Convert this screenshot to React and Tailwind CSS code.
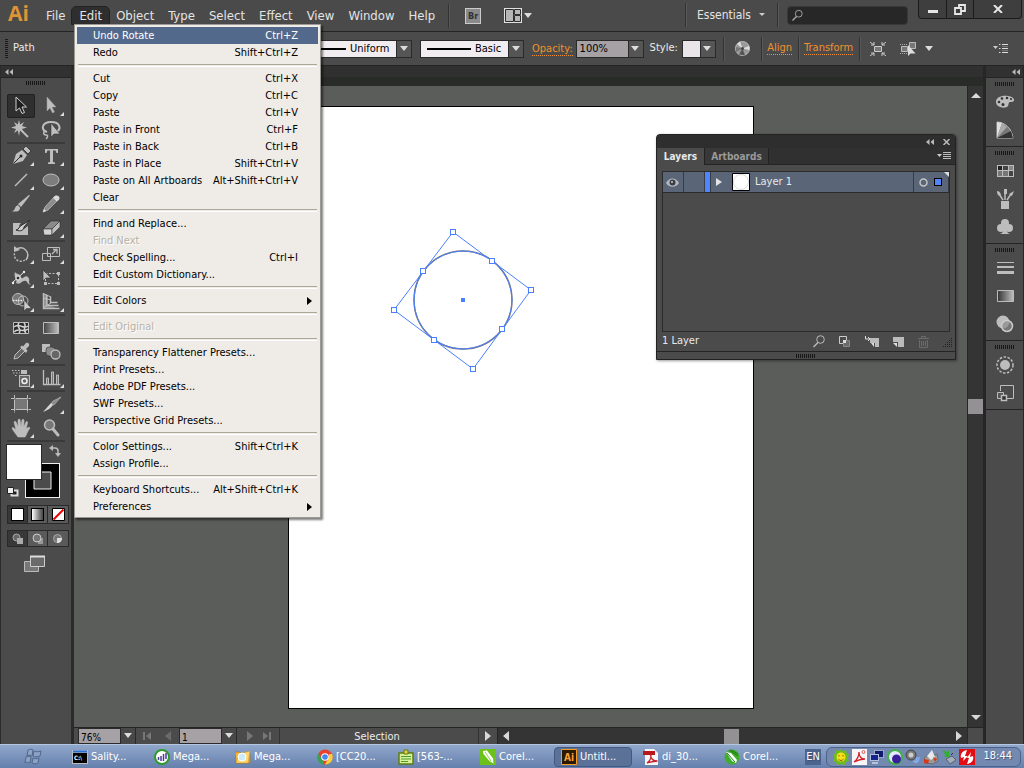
import { useState } from "react";
import clsx from "clsx";

const menus = ["File", "Edit", "Object", "Type", "Select", "Effect", "View", "Window", "Help"];

// null = separator
const editMenu = [
  { label: "Undo Rotate", keys: "Ctrl+Z" },
  { label: "Redo", keys: "Shift+Ctrl+Z" },
  null,
  { label: "Cut", keys: "Ctrl+X" },
  { label: "Copy", keys: "Ctrl+C" },
  { label: "Paste", keys: "Ctrl+V" },
  { label: "Paste in Front", keys: "Ctrl+F" },
  { label: "Paste in Back", keys: "Ctrl+B" },
  { label: "Paste in Place", keys: "Shift+Ctrl+V" },
  { label: "Paste on All Artboards", keys: "Alt+Shift+Ctrl+V" },
  { label: "Clear" },
  null,
  { label: "Find and Replace..." },
  { label: "Find Next", disabled: true },
  { label: "Check Spelling...", keys: "Ctrl+I" },
  { label: "Edit Custom Dictionary..." },
  null,
  { label: "Edit Colors", sub: true },
  null,
  { label: "Edit Original", disabled: true },
  null,
  { label: "Transparency Flattener Presets..." },
  { label: "Print Presets..." },
  { label: "Adobe PDF Presets..." },
  { label: "SWF Presets..." },
  { label: "Perspective Grid Presets..." },
  null,
  { label: "Color Settings...", keys: "Shift+Ctrl+K" },
  { label: "Assign Profile..." },
  null,
  { label: "Keyboard Shortcuts...", keys: "Alt+Shift+Ctrl+K" },
  { label: "Preferences", sub: true },
];

const L = "#bdbdbd"; // light icon colour
const D = "#2b2b2b"; // dark icon colour

// [name, has flyout, artwork]
const toolGroups = [
  [
    ["Selection", false, <path d="M7 3v14l3.5-3 2.5 5.5 2.5-1-2.5-5.500h4.500z" fill="#1e1e1e" stroke="#d0d0d0" />],
    ["Direct Selection", true, <path d="M8 3v14l3-3 2.500 5 2-1-2.500-5h4z" fill={L} stroke="#999" strokeWidth=".5" />],
    [
      "Magic Wand",
      false,
      <g stroke={L}>
        <path d="M12 12l7 7" strokeWidth="2" />
        <path d="M10 2l1.200 4.500L15 4l-2 4 5 1.500-5 1.500 2 4-4-2.500L10 18l-1.200-5.500L5 15l2-4-5-1.500L7 8 5 4l3.800 2.500z" fill={L} stroke="none" />
      </g>,
    ],
    [
      "Lasso",
      false,
      <g>
        <path d="M8 14C1 12 3 4 12 4s11 7 5 10" fill="none" stroke={L} strokeWidth="2" />
        <path d="M7 13c-3 0-3 4 0 4s1 3 0 4" fill="none" stroke={L} strokeWidth="1.500" />
        <path d="M12 5v14l3-3h6z" fill={L} stroke={D} strokeWidth=".5" />
      </g>,
    ],
  ],
  [
    [
      "Pen",
      true,
      <g>
        <path d="M4 20l3-10 6-4 5 5-4 6z" fill={L} />
        <path d="M14 5l3-3 5 5-3 3z" fill={L} stroke={D} strokeWidth=".8" />
        <path d="M4.500 19.500l7-7" stroke={D} />
        <circle cx="12" cy="12" r="1.500" fill={D} />
      </g>,
    ],
    ["Type", true, <path d="M6 5h13v4h-1.500l-1-2.500h-2.500V18l2 .5V20H9v-1.500l2-.5V6.500H8.500l-1 2.500H6z" fill={L} />],
    ["Line Segment", true, <path d="M6 18L18 6" stroke={L} strokeWidth="1.500" />],
    ["Ellipse", true, <ellipse cx="12" cy="12" rx="8" ry="6" fill="#7d7d7d" stroke={L} />],
    [
      "Paintbrush",
      false,
      <g fill={L}>
        <path d="M21 3.500L12 15l-3-3L20 3z" />
        <path d="M11 15.500c0 5-5 4-8 4 4-1.500 2-5 6-6.500z" />
      </g>,
    ],
    [
      "Pencil",
      true,
      <g>
        <path d="M4 20l2-5L16 4l4 3L9 18z" fill="#8d8d8d" stroke={L} strokeWidth=".8" />
        <path d="M16 4c2-1.500 6 1 4 3.500l-2 2-4-3.500z" fill="#d8d8d8" />
        <path d="M4 20l1-3 2 2z" fill="#e2e2e2" />
      </g>,
    ],
    [
      "Blob Brush",
      false,
      <g>
        <path d="M4 7h8c-3 2-2 8 3 6l4-3v9H4z" fill={L} />
        <path d="M21 4L13 9c-3 1-3 5-6 5 5 2 8 0 8-3z" fill="#cfcfcf" stroke={D} />
      </g>,
    ],
    [
      "Eraser",
      true,
      <g stroke={D} strokeWidth=".6">
        <path d="M4 13l8-8h9l-8 8z" fill="#8a8a8a" />
        <path d="M4 13h9v6H5z" fill="#d4d4d4" />
        <path d="M13 13l8-8v6l-8 8z" fill={L} />
      </g>,
    ],
  ],
  [
    [
      "Rotate",
      true,
      <g>
        <path d="M8 7c7-4 14 4 9 11" fill="none" stroke={L} strokeWidth="1.500" />
        <path d="M16 18c-6 4-13-2-10-8" fill="none" stroke={L} strokeWidth="1.500" strokeDasharray="2 1.500" />
        <path d="M5 4v6l6-2z" fill={L} />
      </g>,
    ],
    [
      "Scale",
      true,
      <g fill="none" stroke={L}>
        <path d="M8.500 5.500h12v9h-12z" />
        <path d="M3.500 11.500h8v7h-8z" />
        <path d="M13 12l5-5M14 7.500h4v4" strokeWidth="1.300" />
      </g>,
    ],
    [
      "Width",
      true,
      <g>
        <path d="M3 17l12-11" stroke="#eee" />
        <path d="M6 6c2 3 5 1 6 5s4-3 7 0c3 4-1 5 3 8-5-1-3-5-7-4s-3 4-8 2c2-3-3-6-1-11z" fill={L} />
        <circle cx="9" cy="12" r="2" fill={D} stroke="#eee" />
        <circle cx="4" cy="17" r="1.200" fill="#eee" />
        <circle cx="15" cy="6" r="1.200" fill="#eee" />
      </g>,
    ],
    [
      "Free Transform",
      false,
      <g>
        <path d="M6.500 7.500h13v10h-13z" fill="none" stroke={L} strokeDasharray="2 1.500" />
        <path d="M18 6h3v3h-3zM18 16h3v3h-3zM5 16h3v3H5z" fill={L} />
        <path d="M4 4v11l3-3h5z" fill={L} stroke={D} strokeWidth=".6" />
      </g>,
    ],
    [
      "Shape Builder",
      true,
      <g>
        <circle cx="9" cy="9" r="5.500" fill="#777" stroke={L} />
        <circle cx="14" cy="11" r="5" fill="none" stroke={L} />
        <path d="M4 10.500h12" stroke="#eee" strokeWidth="1.500" strokeDasharray="1.500 1" />
        <path d="M15 10v11l2.500-2.500h5z" fill="#ccc" stroke={D} strokeWidth=".5" />
      </g>,
    ],
    [
      "Perspective Grid",
      true,
      <g fill="none" stroke={L}>
        <path d="M4 3l5 3v9l11 4H4z" fill="#888" stroke="none" />
        <path d="M4.500 3v15.500h16" strokeWidth="1.500" />
        <path d="M7.500 4.500v11h12M11.500 6.500v6h7" strokeWidth="1.500" />
        <path d="M4 3.500l8 3.500M4 8l8 2M4 18l8-5" />
      </g>,
    ],
  ],
  [
    [
      "Mesh",
      false,
      <g>
        <path d="M4.500 6.500h15v11h-15z" fill="#2a2a2a" stroke={L} />
        <path d="M5 11c5-5 9 3 14-1M5 16c4-5 10 1 14-3M10 7c-4 4 4 6 0 10M15 7c4 4-3 6 2 10" fill="none" stroke="#d0d0d0" strokeWidth="1.500" />
      </g>,
    ],
    [
      "Gradient",
      false,
      <g>
        <defs>
          <linearGradient id="gTool">
            <stop stopColor="#444" />
            <stop offset="1" stopColor="#c0c0c0" />
          </linearGradient>
        </defs>
        <path d="M4.500 6.500h15v11h-15z" fill="url(#gTool)" stroke={L} />
      </g>,
    ],
    [
      "Eyedropper",
      true,
      <g>
        <path d="M5 19l1-4 7-7 3 3-7 7z" fill="#666" stroke={L} />
        <path d="M11 7l2-1.500 1 1L17 3c2-1 4 1 3 3l-3 3 1.500 1.500L17 13z" fill={L} />
      </g>,
    ],
    [
      "Blend",
      false,
      <g>
        <path d="M3 4h8v8H3z" fill={L} />
        <rect x="7" y="7" width="9" height="9" rx="3" fill="#8b8b8b" stroke={D} strokeWidth=".6" />
        <circle cx="16.500" cy="14.500" r="4.500" fill="#666" stroke={L} strokeWidth="1.300" />
      </g>,
    ],
  ],
  [
    [
      "Symbol Sprayer",
      true,
      <g>
        <rect x="10.500" y="9.500" width="10" height="11" fill="#666" stroke={L} />
        <path d="M12 4h6v4h-6z" fill={L} />
        <circle cx="15.500" cy="15" r="2.500" fill="none" stroke="#eee" strokeWidth="1.500" />
        <path d="M3 4.500h8M4 7h7M6 9.500h3" stroke={L} strokeDasharray="1.500 1.500" />
      </g>,
    ],
    [
      "Column Graph",
      true,
      <g fill="none" stroke={L}>
        <path d="M4.500 4v14.500h17" strokeWidth="1.300" />
        <path d="M7.500 18v-6h2v6M12.500 18V6h2v12M17.500 18V9h2v9" fill="#777" />
      </g>,
    ],
  ],
  [
    [
      "Artboard",
      false,
      <g>
        <path d="M6 7h12v10H6z" fill="#777" />
        <path d="M2 6.500h20M2 17.500h20M5.500 3v18M18.500 3v18" stroke={L} strokeDasharray="3.500 1 12 1" />
      </g>,
    ],
    [
      "Slice",
      true,
      <g>
        <path d="M22 5l-8 4-2 3 3 1z" fill="#8a8a8a" stroke={L} strokeWidth=".6" />
        <path d="M12 11L4 20c5-2 8-4 10-7z" fill="#d5d5d5" />
      </g>,
    ],
    [
      "Hand",
      true,
      <path
        d="M9 21c-2-3-5-6-6-9 1-1 2 0 4 2L5 6c1-1.500 2-.5 2.500 1L9 11V4c1-1.500 2-1 2.200.5L12 11l1-7c1-1.300 2-.6 2 .8L14.800 11l2.200-5c1-1 2-.2 1.500 1L17 13c2-2 4-2 4-1-3 4-3 6-5 9z"
        fill={L}
        stroke={L}
        strokeWidth=".6"
      />,
    ],
    [
      "Zoom",
      false,
      <g>
        <circle cx="10.500" cy="9" r="5" fill="#777" stroke={L} strokeWidth="1.500" />
        <path d="M14 13l5 6" stroke={L} strokeWidth="3" strokeLinecap="round" />
      </g>,
    ],
  ],
];

const dockGroups = [
  [
    [
      "Color",
      <g>
        <path d="M3 12c0-5 6-7 12-6 7 1 8 6 3 6-3 0-2 2-3 4-2 3-12 2-12-4z" fill={L} />
        <g fill="#333">
          <circle cx="6" cy="12" r="1.300" />
          <circle cx="9" cy="8.500" r="1.300" />
          <circle cx="14" cy="8" r="1.300" />
          <circle cx="18" cy="9" r="1.100" />
          <circle cx="10" cy="14.500" r="1.500" />
        </g>
      </g>,
    ],
    [
      "Color Guide",
      <g>
        <path d="M4 20V4c8 0 15 7 16 16z" fill="#777" stroke={L} />
        <path d="M4 20V4l5 1z" fill="#e0e0e0" />
        <path d="M4 20L9 5l5 4z" fill="#aaa" />
        <path d="M4 20L18 13l2 7z" fill="#333" />
      </g>,
    ],
  ],
  [
    [
      "Swatches",
      <g>
        <path d="M4 6h17v12H4z" fill={L} />
        <path d="M5 7h4v4H5z" fill="#222" />
        <path d="M10 7h5v4h-5z" fill="#444" />
        <path d="M16 7h4v4h-4z" fill="#888" />
        <path d="M5 12h4v5H5zM10 12h5v5h-5z" fill="#777" />
        <path d="M16 12h4v5h-4z" fill="#444" />
      </g>,
    ],
    [
      "Brushes",
      <g fill={L}>
        <path d="M8 14h8v8H8z" />
        <path d="M10 13L6 7M12 13V6M14 13l4-6" stroke={L} strokeWidth="1.500" />
        <path d="M4 4c3 0 4 3 4 5-3 0-4-2-4-5zM11 2h3v5h-3zM16 7l5-3-2 5z" />
      </g>,
    ],
    [
      "Symbols",
      <g fill={L}>
        <circle cx="12" cy="8" r="4" />
        <circle cx="8" cy="13" r="4" />
        <circle cx="16" cy="13" r="4" />
        <path d="M11 11h2c0 5 1 7 4 8H7c3-1 4-3 4-8z" />
      </g>,
    ],
  ],
  [
    ["Stroke", <path d="M4 6h17v1H4zM4 10h17v2H4zM4 15h17v3H4z" fill={L} />],
    [
      "Gradient",
      <g>
        <defs>
          <linearGradient id="gDock">
            <stop stopColor="#333" />
            <stop offset="1" stopColor="#c0c0c0" />
          </linearGradient>
        </defs>
        <path d="M4.500 6.500h16v11h-16z" fill="url(#gDock)" stroke={L} />
      </g>,
    ],
    [
      "Transparency",
      <g>
        <circle cx="10" cy="10" r="6.500" fill={L} />
        <circle cx="14" cy="14" r="5.500" fill="#8a8a8a" fillOpacity=".7" stroke="#ccc" strokeWidth="1.500" />
      </g>,
    ],
  ],
  [
    [
      "Appearance",
      <g>
        <circle cx="12" cy="12" r="5" fill={L} />
        <circle cx="12" cy="12" r="8" fill="none" stroke={L} strokeWidth="1.500" strokeDasharray="2.500 1.500" />
      </g>,
    ],
    [
      "Graphic Styles",
      <g fill="none" stroke={L}>
        <path d="M7.500 10V4.500h13v13H13" />
        <path d="M4.500 11.500h6v6h-6z" fill="#555" />
        <path d="M8.500 14.500h5v5h-5z" fill="#333" strokeWidth="1.500" />
      </g>,
    ],
  ],
];

const tasks = [
  [
    "Sality...",
    <g>
      <path d="M0 1h16v14H0z" fill="#bbb" />
      <path d="M1 4h14v10H1z" fill="#000" />
      <path d="M1 1.500h14v2H1z" fill="#2a6fd6" />
      <text x="2" y="11" fontSize="6" fill="#fff" fontWeight="bold">C:\</text>
    </g>,
  ],
  [
    "Mega...",
    <g>
      <circle cx="8" cy="8" r="7" fill="#fff" stroke="#2e9a2e" strokeWidth="2" />
      <path d="M4.500 11V8M7 12V7M9.500 12V5M12 10V4" stroke="#4b3a9b" strokeWidth="1.500" />
    </g>,
  ],
  [
    "Mega...",
    <g>
      <path d="M0 3h5l1 2h9v9H1z" fill="#f2b53a" stroke="#a9701a" strokeWidth=".7" />
      <path d="M4 5l11-3-2 12H1z" fill="#ffd76a" stroke="#c98a20" strokeWidth=".5" />
      <circle cx="7" cy="8" r="4" fill="#cdeaf8" stroke="#fff" />
    </g>,
  ],
  [
    "[CC20...",
    <g>
      <circle cx="8" cy="8" r="7.500" fill="#e8412f" />
      <path d="M1.500 4.500L6 12l1.500 3.500C1 15-1.500 9 1.500 4.500z" fill="#37a352" />
      <path d="M8 15.500L11.500 9l.5-4h3c2 5-1 10.500-7 10.500z" fill="#fcd03b" />
      <circle cx="8" cy="8" r="3.800" fill="#fff" />
      <circle cx="8" cy="8" r="2.800" fill="#4285f4" />
    </g>,
  ],
  [
    "[563-...",
    <g>
      <path d="M1 4h14v11H1z" fill="#d9f09a" stroke="#5f7d12" strokeWidth="1.500" />
      <path d="M6 1h4v4H6z" fill="#e8d23a" stroke="#5f7d12" />
      <path d="M3 7.500h10M3 10h10M3 12.500h7" stroke="#4f9d2b" />
    </g>,
  ],
  [
    "Corel...",
    <g>
      <path d="M0 0h16v16H0z" fill="#6cc219" />
      <path d="M3 2l4-.5 6 8 .5 5-4-2.500-6-7z" fill="#fff" />
      <path d="M5 3l6 9" stroke="#6cc219" strokeWidth=".8" />
    </g>,
  ],
  [
    "Untitl...",
    <g>
      <path d="M.5.5h15v15H.5z" fill="#2a1a05" stroke="#f59a22" />
      <text x="3" y="12" fontSize="10" fill="#f9a23a" fontWeight="bold">Ai</text>
    </g>,
  ],
  [
    "di_30...",
    <g>
      <path d="M2 0h9l4 4v12H2z" fill="#f4f4f4" />
      <path d="M0 2h12v4H0z" fill="#b8161b" />
      <path d="M4 14c5-3 4-8 3.500-9 0 5 3 7 7 7-4 0-7 1-10.500 2z" fill="none" stroke="#c8202a" strokeWidth="1.300" />
    </g>,
  ],
  [
    "Corel...",
    <g>
      <circle cx="8" cy="8" r="7.500" fill="#3fae2a" />
      <path d="M2 3l5 1 6 7-1 3-4-2z" fill="#fff" />
      <path d="M5 1l9 6M7 1l7 4M3 4l8 9" stroke="#1d7d18" />
    </g>,
  ],
];

const trayIcons = [
  <g>
    <path d="M8 0l2 2 3-1 .5 3L16 6l-1.500 3L16 12l-3 1-1 3-4-1-4 1-1-3-3-1 1.500-3L0 6l2.500-2L3 1l3 1z" fill="#6dbb1e" />
    <circle cx="8" cy="8" r="4.500" fill="#f6e21c" />
    <path d="M6 6v1.500M10 6v1.500M5.500 10c1.500 2 3.500 2 5 0" stroke="#8b5b00" fill="none" />
  </g>,
  <g>
    <path d="M1 0h15v16H1z" fill="#f6f6f6" />
    <path d="M3 13c4-3 5-6 5-10 0 5 3 7 6 7-4 0-7 1-11 3z" fill="none" stroke="#d3202a" strokeWidth="1.300" />
    <circle cx="12.500" cy="3" r="1.500" fill="none" stroke="#d3202a" strokeWidth=".7" />
  </g>,
  <g>
    <path d="M5 1h10v8H5z" fill="#9aa6c8" />
    <path d="M6 2h8v6H6z" fill="#101b6b" />
    <path d="M1 5h9v7H1z" fill="#b4bedb" />
    <path d="M2 6h7v5H2z" fill="#15248c" />
    <path d="M3 13h6v2H3z" fill="#b9c2d8" />
  </g>,
  <g>
    <circle cx="8" cy="8" r="7" fill="#e7e7ff" stroke="#3fb34a" strokeWidth="2" />
    <circle cx="9.500" cy="10" r="4.500" fill="#3a1e9a" />
  </g>,
  <g>
    <circle cx="6" cy="6" r="5" fill="#777" stroke="#444" />
    <circle cx="6" cy="6" r="2.500" fill="#ccc" />
    <path d="M10 14c3-1 4-3 4-6M8 13c3-1 4-3 4-5" stroke="#8fb2ff" fill="none" strokeWidth="1.300" />
  </g>,
  <g>
    <path d="M1 9l4-3 5 1 4-2 1 7-5 3-7-1z" fill="#999" stroke="#555" strokeWidth=".6" />
    <path d="M4 7l5-6 3 7-4 3z" fill="#e9e9e9" />
    <path d="M1 10l5 1-1 4-4-1zM10 8l4 2-2 3z" fill="#d33a1a" />
  </g>,
  <g>
    <path d="M1 1l5 2 2-2v7L3 8l1.500-2z" fill="#2fae2f" />
    <path d="M5 10l6-3 4 4-6 4z" fill="#a4adb8" stroke="#4b535c" strokeWidth=".8" />
    <path d="M10 6l2-2" stroke="#333" />
  </g>,
  <g>
    <path d="M0 0h16v16H0z" fill="#e20d12" />
    <path d="M8 1C3 2 1 5 2 9l3-1-1 4 5-5-3 0z" fill="#fff" />
    <path d="M8 15c5-1 7-4 6-8l-3 1 1-5-4 6h2z" fill="#fff" />
  </g>,
];

const Caret = ({ fill = "#dcdcdc" }) => (
  <svg width="9" height="6" viewBox="0 0 9 6">
    <path d="M0 0h8L4 5z" fill={fill} />
  </svg>
);

const Arrow = ({ d, fill = "#d8d8d8" }) => (
  <svg width="10" height="10" viewBox="0 0 10 10">
    <path d={d} fill={fill} />
  </svg>
);

const left = "M8 0v10L2 5z";
const right = "M2 0v10l6-5z";
const up = "M0 8h10L5 3z";
const down = "M0 2h10L5 7z";

const Rewind = () => (
  <svg width="8" height="6" viewBox="0 0 8 6">
    <path d="M3.500 0v6L0 3zM8 0v6L4.500 3z" fill="#bbb" />
  </svg>
);

const Grip = () => (
  <svg width="20" height="4" viewBox="0 0 20 4">
    <path d="M0 2h20" stroke="#171717" strokeWidth="4" strokeDasharray="1 1" />
  </svg>
);

const Divider = () => <span className="h-6 w-px bg-[#333] shadow-[1px_0_0_#585858]" />;

function MenuBar({ open, setOpen }) {
  return (
    <header className="flex h-[31px] shrink-0 items-start bg-[#4a4a4a] text-[#e4e4e4]">
      <svg width="39" height="31" viewBox="0 0 39 31" role="img" aria-label="Ai">
        <text x="8" y="21" fontSize="21" fontWeight="bold" fill="#dc9436" fontFamily="'Open Sans', sans-serif">
          Ai
        </text>
      </svg>
      <nav className="flex pt-[7px]">
        {menus.map((name) => (
          <button
            key={name}
            onClick={() => setOpen(open === name ? null : name)}
            className={clsx(
              "h-[17px] px-[7px] text-[13px] leading-[17px]",
              open === name && "rounded-t-sm bg-[#2e2e2e] outline outline-[#222]"
            )}
          >
            {name}
          </button>
        ))}
      </nav>
      <div className="ml-[6px] flex h-[31px] items-center">
        <Divider />
        <button aria-label="Bridge" className="ml-4 h-4 w-4 border border-[#ccc] bg-[#8a8a8a] text-center text-[9px] leading-[14px] font-bold text-[#333]">
          Br
        </button>
        <button aria-label="Arrange Documents" className="ml-[23px] flex items-center gap-[2px]">
          <svg width="18" height="15" viewBox="0 0 18 15">
            <path d="M0 0h18v15H0z" fill="#e0e0e0" />
            <path d="M1.500 1.500h8v12h-8zM10.500 1.500h6v5h-6zM10.500 7.500h6v6h-6z" fill="#b5b5b5" stroke="#2e2e2e" />
          </svg>
          <Caret />
        </button>
      </div>
      <div className="ml-auto flex h-[30px] items-center">
        <Divider />
        <button className="flex items-center gap-2 pr-3 pl-[11px] text-[12px]">
          Essentials
          <svg width="6" height="4" viewBox="0 0 6 4">
            <path d="M0 0h6L3 3z" fill="#ccc" />
          </svg>
        </button>
        <Divider />
        <label className="ml-[9px] flex h-[19px] w-[121px] items-center rounded-sm border border-[#383838] bg-[#272727] pl-1">
          <svg width="12" height="13" viewBox="0 0 12 13">
            <circle cx="7.500" cy="4.500" r="3.800" fill="none" stroke="#aaa" />
            <path d="M5 7.500L.5 12" stroke="#aaa" strokeWidth="1.500" />
          </svg>
          <input aria-label="Search" className="w-full bg-transparent px-1 text-[11px] outline-none" />
        </label>
      </div>
      <div className="mr-[2px] ml-[10px] flex h-[19px] shrink-0 divide-x divide-[#1c1c1c] rounded-b border border-t-0 border-[#1c1c1c] bg-[#3e3e3e]">
        <button aria-label="Minimize" className="flex w-[28px] justify-center pt-[10px]">
          <span className="h-[3px] w-[10px] bg-[#e6e6e6]" />
        </button>
        <button aria-label="Restore" className="flex w-[27px] justify-center pt-[4px]">
          <svg width="12" height="11" viewBox="0 0 12 11">
            <path d="M5 1h6v6H5z" fill="none" stroke="#e6e6e6" strokeWidth="1.800" />
            <path d="M1 4h6v6H1z" fill="#3e3e3e" stroke="#e6e6e6" strokeWidth="1.800" />
          </svg>
        </button>
        <button aria-label="Close" className="flex w-[47px] justify-center pt-[5px]">
          <svg width="10" height="8" viewBox="0 0 10 8">
            <path d="M1 0l8 8M9 0L1 8" stroke="#e6e6e6" strokeWidth="2" />
          </svg>
        </button>
      </div>
    </header>
  );
}

function EditMenu() {
  return (
    <div role="menu" className="absolute top-6 left-[74px] z-20 w-[247px] border border-[#9c9a94] bg-[#efebe7] p-[2px] text-black shadow-[2px_2px_2px_rgba(0,0,0,0.5)]">
      {editMenu.map((item, i) =>
        item === null ? (
          <hr key={i} className="mx-px my-[3px] h-[3px] border-t-1 border-b-1 border-t-[#aca899] border-b-white" />
        ) : (
          <button
            key={i}
            role="menuitem"
            disabled={item.disabled}
            className={clsx(
              "flex h-[17px] w-full items-center justify-between pl-4 text-[11px] leading-[17px]",
              i === 0 && "bg-[#52698c] text-white",
              item.disabled && "text-[#b5b1a5] [text-shadow:1px_1px_0_#fff]",
              item.sub ? "pr-[6px]" : "pr-5"
            )}
          >
            <span>{item.label}</span>
            {item.keys && <span>{item.keys}</span>}
            {item.sub && (
              <svg width="5" height="8" viewBox="0 0 5 8">
                <path d="M0 0v8l5-4z" />
              </svg>
            )}
          </button>
        )
      )}
    </div>
  );
}

function StrokeSelect({ label, value, className }) {
  return (
    <label className={clsx("flex h-[18px] border border-[#2a2a2a] bg-[#f0ecf0] text-black", className)}>
      <span className="my-auto ml-[6px] h-[2px] flex-1 bg-black" />
      <select aria-label={label} className="ml-1 appearance-none pr-[6px] text-[11px] leading-4">
        <option>{value}</option>
      </select>
      <span className="flex w-[15px] items-center justify-center border-l border-[#2a2a2a] bg-[#555]">
        <Caret />
      </span>
    </label>
  );
}

const OrangeLink = ({ children }) => (
  <a href="#" className="border-b border-dotted border-[#f0902f] text-[11px] leading-[13px] text-[#f0902f]">
    {children}
  </a>
);

function ControlBar() {
  return (
    <div className="flex h-[35px] shrink-0 items-center border-y border-[#242424] bg-[#4b4b4b] text-[11px] text-[#ececec]">
      <div className="flex w-[412px] items-center pl-[5px]">
        <svg width="3" height="20" viewBox="0 0 3 20">
          <path d="M1.500 0v20" stroke="#1b1b1b" strokeWidth="3" strokeDasharray="1 1" />
        </svg>
        <span className="ml-[5px]">Path</span>
        <StrokeSelect label="Variable width profile" value="Uniform" className="ml-auto w-[104px]" />
      </div>
      <StrokeSelect label="Brush definition" value="Basic" className="mr-2 ml-2 w-[104px]" />
      <OrangeLink>Opacity:</OrangeLink>
      <div className="mr-[6px] ml-[3px] flex h-[18px] w-[68px] border border-[#2a2a2a] bg-[#a5a1a5] text-black">
        <input aria-label="Opacity" defaultValue="100%" className="w-0 flex-1 px-[3px] pt-px outline-none" />
        <button aria-label="Opacity presets" className="flex w-[15px] items-center justify-center border-l border-[#2a2a2a] bg-[#555]">
          <Caret />
        </button>
      </div>
      <span className="w-[26px] whitespace-nowrap">Style:</span>
      <button aria-label="Graphic style" className="ml-[6px] flex h-[18px] w-[34px] items-stretch border border-[#2a2a2a]">
        <span className="w-[17px] bg-[#e9e5e9]" />
        <span className="flex flex-1 items-center justify-center border-l border-[#2a2a2a] bg-[#555]">
          <Caret />
        </span>
      </button>
      <div className="ml-[7px] flex items-center">
        <Divider />
        <button aria-label="Recolor Artwork" className="mx-[11px]">
          <svg width="15" height="15" viewBox="0 0 15 15">
            <circle cx="7.500" cy="7.500" r="7" fill="#999" stroke="#bbb" />
            <path d="M7.500 7.500L2 3l3-2.500zM7.500 7.500L14 5l.5 4z" fill="#ddd" />
            <path d="M7.500 7.500L4 13.500l6 1z" fill="#555" />
            <path d="M7.500 7.500L1 6v5z" fill="#777" />
            <circle cx="7.500" cy="7.500" r="1.500" fill="#444" />
          </svg>
        </button>
        <Divider />
      </div>
      <div className="flex items-center">
        <span className="w-[36px] text-center">
          <OrangeLink>Align</OrangeLink>
        </span>
        <Divider />
        <span className="w-[60px] text-center">
          <OrangeLink>Transform</OrangeLink>
        </span>
        <Divider />
      </div>
      <button aria-label="Isolate Selected Object" className="ml-[10px]">
        <svg width="16" height="14" viewBox="0 0 16 14">
          <path d="M4.500 4.500h7v5h-7z" fill="#777" stroke="#ccc" />
          <path d="M0 0l4 3M16 0l-4 3M0 14l4-3M16 14l-4-3M4 0v3H1M12 0v3h3M4 14v-3H1M12 14v-3h3" fill="none" stroke="#ccc" />
        </svg>
      </button>
      <button aria-label="Select Similar Objects" className="ml-[14px] flex items-center gap-2">
        <svg width="17" height="14" viewBox="0 0 17 14">
          <path d="M1.500 4.500h6v5h-6zM9.500.5h6v6h-6z" fill="#777" stroke="#bbb" />
          <path d="M0 2.500h8M0 11.500h8" stroke="#aaa" strokeDasharray="1 1" />
          <path d="M8 3v11l2.500-2.500h5z" fill="#ddd" />
        </svg>
        <Caret />
      </button>
      <button aria-label="Panel menu" className="mr-4 ml-auto">
        <svg width="15" height="9" viewBox="0 0 15 9">
          <path d="M0 2h5L2.500 5z" fill="#ccc" />
          <path d="M6 .5h1.500M9 .5h6M6 4.500h1.500M9 4.500h6M6 8.500h1.500M9 8.500h6" stroke="#ddd" />
          <path d="M9 2.500h6M9 6.500h6" stroke="#777" />
        </svg>
      </button>
    </div>
  );
}

function Toolbox() {
  return (
    <aside className="flex w-[74px] shrink-0 flex-col items-start border-r-3 border-l border-r-[#2b2b2b] border-l-[#2b2b2b] bg-[#4b4b4b]">
      <div className="flex h-3 w-full items-center border-b border-[#242424] bg-[#313131] pl-1">
        <Rewind />
      </div>
      <div className="flex h-4 w-full items-start justify-center pt-[3px]">
        <Grip />
      </div>
      {toolGroups.map((group, g) => (
        <div key={g} className="ml-[6px] grid grid-cols-2 gap-x-[2px] border-b-2 border-[#3a3a3a]">
          {group.map(([name, more, art], i) => (
            <button
              key={name}
              title={name}
              className={clsx("relative flex h-6 w-7 items-center justify-center", g === 0 && i === 0 && "rounded-xs bg-[#2f2f2f] outline -outline-offset-1 outline-[#222]")}
            >
              <svg width="24" height="24" viewBox="0 0 24 24">
                {art}
              </svg>
              {more && (
                <svg className="absolute right-px bottom-[2px]" width="4" height="4" viewBox="0 0 4 4">
                  <path d="M4 0v4H0z" fill="#ddd" />
                </svg>
              )}
            </button>
          ))}
        </div>
      ))}
      <svg className="ml-[5px]" width="56" height="58" viewBox="0 0 56 58" role="img" aria-label="Fill and stroke">
        <path d="M19 21h35v35H19z" fill="#eee" />
        <path d="M20 22h33v33H20z" fill="#000" />
        <path d="M28 30h17v17H28z" fill="#4b4b4b" stroke="#eee" />
        <path d="M0 2h36v36H0z" fill="#2a2a2a" />
        <path d="M1 3h34v34H1z" fill="#fff" />
        <path d="M46 6h3c2 0 3 1 3 3v3" fill="none" stroke="#bbb" strokeWidth="1.500" />
        <path d="M43 6l4-3v6zM49 11h6l-3 4z" fill="#bbb" />
        <path d="M5.500 48.500h6v5h-6z" fill="#222" stroke="#ddd" strokeWidth="2" />
        <path d="M1.500 45.500h6v6h-6z" fill="#eee" stroke="#222" />
      </svg>
      <div className="mt-[5px] ml-[6px] flex h-[19px] divide-x divide-[#2a2a2a] border border-[#2a2a2a]">
        <button aria-label="Color" className="flex w-5 items-center justify-center bg-[#383838]">
          <span className="h-[13px] w-[13px] border border-black bg-white" />
        </button>
        <button aria-label="Gradient" className="flex w-5 items-center justify-center bg-[#5a5a5a]">
          <span className="h-[13px] w-[13px] border border-black bg-linear-to-r from-white to-[#444]" />
        </button>
        <button aria-label="None" className="flex w-5 items-center justify-center bg-[#5a5a5a]">
          <svg width="13" height="13" viewBox="0 0 13 13">
            <path d="M.5.5h12v12H.5z" fill="#fff" stroke="#000" />
            <path d="M1.500 11.500l10-10" stroke="#f00000" strokeWidth="2" />
          </svg>
        </button>
      </div>
      <div className="mt-[6px] ml-[6px] flex h-[17px] divide-x divide-[#2a2a2a] border border-[#2a2a2a]">
        <button aria-label="Draw Normal" className="flex w-5 items-center justify-center bg-[#383838]">
          <svg width="12" height="12" viewBox="0 0 12 12">
            <circle cx="4.500" cy="4.500" r="3.500" fill="#666" stroke="#aaa" />
            <path d="M5 5h6v6H5z" fill="#aaa" />
          </svg>
        </button>
        <button aria-label="Draw Behind" className="flex w-5 items-center justify-center bg-[#5a5a5a]">
          <svg width="12" height="12" viewBox="0 0 12 12">
            <path d="M6 5h5v6H6z" fill="#999" />
            <circle cx="5" cy="5" r="4" fill="#777" stroke="#ccc" />
          </svg>
        </button>
        <button aria-label="Draw Inside" className="flex w-5 items-center justify-center bg-[#5a5a5a]">
          <svg width="12" height="12" viewBox="0 0 12 12">
            <circle cx="5.500" cy="5.500" r="4" fill="#777" stroke="#aaa" />
            <path d="M5 5h5c0 3-2 5-5 5z" fill="#ddd" />
          </svg>
        </button>
      </div>
      <button aria-label="Change Screen Mode" className="mt-2 ml-[23px]">
        <svg width="22" height="18" viewBox="0 0 22 18">
          <path d="M.5 6.500h14v10H.5z" fill="#777" stroke="#bbb" />
          <path d="M6.500 1.500h14v10h-14z" fill="#6a6a6a" stroke="#ccc" />
          <path d="M6 1.500h15" stroke="#ddd" strokeWidth="2" />
        </svg>
      </button>
    </aside>
  );
}

// anchors of the rotated ellipse bounding box
const handles = [
  [453, 232],
  [492, 261],
  [531, 290],
  [502, 329],
  [473, 369],
  [434, 340],
  [394, 310],
  [423, 271],
];

function Artboard() {
  return (
    <div className="absolute top-5 left-[214px] h-[603px] w-[466px] border border-black bg-white">
      <svg width="464" height="601" viewBox="289 107 464 601">
        <circle cx="463" cy="300" r="49" fill="none" stroke="#777" strokeWidth="1.500" />
        <g fill="none" stroke="#4a80ff">
          <circle cx="463" cy="300" r="49" />
          <path d="M453 232L531 290L473 369L394 310z" />
          {handles.map(([x, y]) => (
            <rect key={x} x={x - 2.5} y={y - 2.5} width="5" height="5" fill="#fff" />
          ))}
        </g>
        <path d="M461 298h4v4h-4z" fill="#4a80ff" />
      </svg>
    </div>
  );
}

function LayersPanel() {
  return (
    <section className="absolute top-12 left-[582px] w-[300px] rounded-t-sm border border-[#222] bg-[#4b4b4b] text-[11px] text-[#e8e8e8] shadow-[1px_1px_3px_rgba(0,0,0,0.4)]">
      <div className="flex h-[13px] items-center justify-end gap-[9px] bg-[#2d2e2d] pr-[5px]">
        <Rewind />
        <button aria-label="Close panel">
          <svg width="7" height="6" viewBox="0 0 7 6">
            <path d="M.5 0l6 6M6.500 0l-6 6" stroke="#bbb" strokeWidth="1.500" />
          </svg>
        </button>
      </div>
      <div className="flex h-[17px] border-b border-[#242424] bg-[#2f302f] font-bold">
        <button className="h-[17px] w-[47px] bg-[#4b4b4b] text-[10px] leading-[17px]">Layers</button>
        <button className="w-[65px] border-x border-[#222] bg-[#383838] text-[10px] text-[#9a9a9a]">Artboards</button>
        <button aria-label="Layers panel menu" className="mr-1 ml-auto">
          <svg width="14" height="8" viewBox="0 0 14 8">
            <path d="M0 2h5L2.500 5z" fill="#ccc" />
            <path d="M6 .5h8M6 2.500h8M6 4.500h8M6 6.500h8" stroke="#bbb" />
          </svg>
        </button>
      </div>
      <div className="mx-[5px] mt-[6px] h-[161px] border border-[#2b2b2b]">
        <div className="relative flex h-[21px] items-stretch divide-x divide-[#363b45] border-b border-[#2b2b2b] bg-[#5a6578]">
          <button aria-label="Toggle visibility" className="flex w-[21px] items-center justify-center pr-[2px]">
            <svg width="13" height="9" viewBox="0 0 13 9">
              <path d="M0 5c3-6 10-6 13 0-3 5-10 5-13 0z" fill="#b4b8c0" />
              <circle cx="6.500" cy="4.500" r="3" fill="#3a3d44" />
              <circle cx="6" cy="4" r="1" fill="#ccc" />
            </svg>
          </button>
          <span className="w-[21px]" />
          <span className="w-[6px] bg-[#4f85ff]" />
          <div className="flex flex-1 items-center">
            <button aria-label="Expand layer" className="ml-[5px] flex">
              <svg width="6" height="8" viewBox="0 0 6 8">
                <path d="M0 0v8l6-4z" fill="#e4e4e4" />
              </svg>
            </button>
            <svg className="ml-[10px]" width="18" height="18" viewBox="0 0 18 18">
              <path d="M.5.5h17v17H.5z" fill="#fff" stroke="#000" />
              <circle cx="9" cy="9" r="7.500" fill="none" stroke="#ddd" />
            </svg>
            <span className="ml-[5px]">Layer 1</span>
          </div>
          <div className="flex w-[35px] items-center gap-[6px] pl-[5px]">
            <svg width="9" height="9" viewBox="0 0 9 9">
              <circle cx="4.500" cy="4.500" r="3.500" fill="none" stroke="#c4c4c4" strokeWidth="1.500" />
            </svg>
            <span className="h-2 w-2 border border-black bg-[#4f85ff]" />
          </div>
          <svg className="absolute top-0 right-0" width="5" height="5" viewBox="0 0 5 5">
            <path d="M0 0h5v5z" fill="#ddd" />
          </svg>
        </div>
      </div>
      <div className="flex h-[19px] items-center pl-[5px]">
        <span>1 Layer</span>
        <div className="mr-[3px] ml-auto flex items-center gap-[14px]">
          <button aria-label="Locate Object">
            <svg width="12" height="13" viewBox="0 0 12 13">
              <circle cx="7.500" cy="4.500" r="3.800" fill="none" stroke="#bbb" />
              <path d="M5 7.500L.5 12" stroke="#bbb" strokeWidth="1.500" />
            </svg>
          </button>
          <button aria-label="Clipping Mask">
            <svg width="12" height="12" viewBox="0 0 12 12">
              <path d="M.5.5h7v7h-7z" fill="none" stroke="#ccc" />
              <path d="M4.500 4.500h6v6h-6z" fill="#6a6a6a" stroke="#888" />
              <path d="M4 4h3v3H4z" fill="#ddd" />
            </svg>
          </button>
          <button aria-label="New Sublayer">
            <svg width="14" height="12" viewBox="0 0 14 12">
              <path d="M5 2h9v9h-4V7H5z" fill="#bbb" />
              <path d="M6 7h3v4z" fill="#ddd" />
              <path d="M.5 0v3h4M3 1l2 2-2 2" fill="none" stroke="#ddd" />
            </svg>
          </button>
          <button aria-label="New Layer">
            <svg width="11" height="12" viewBox="0 0 11 12">
              <path d="M0 1h11v10H5V6H0z" fill="#bbb" />
              <path d="M0 7h4v4z" fill="#ddd" />
            </svg>
          </button>
          <button aria-label="Delete Selection">
            <svg width="11" height="12" viewBox="0 0 11 12">
              <path d="M1.500 4v7.500h8V4M3.500 5v5M5.500 5v5M7.500 5v5M0 2.500h11M3.500 2V.5h4V2" fill="none" stroke="#6b6b6b" />
            </svg>
          </button>
          <svg width="9" height="10" viewBox="0 0 9 10">
            <path d="M0 9.500h9M2 7.500h7M4 5.500h5M6 3.500h3M8 1.500h1" stroke="#222" strokeDasharray="1 1" />
          </svg>
        </div>
      </div>
      <div className="flex h-2 items-center justify-center border-t border-[#242424]">
        <Grip />
      </div>
    </section>
  );
}

function StatusBar() {
  return (
    <div className="flex h-[17px] shrink-0 items-stretch border-t border-[#242424] bg-[#4b4b4b] text-[11px] text-[#ececec]">
      <div className="flex w-[423px] items-stretch pl-1">
        <input aria-label="Zoom level" defaultValue="76%" className="h-4 w-[43px] border border-[#2a2a2a] bg-[#a5a1a5] px-[2px] pt-[2px] text-[10px] text-black outline-none" />
        <button aria-label="Zoom presets" className="flex w-[15px] items-center justify-center border-r border-[#2a2a2a] bg-[#484848]">
          <Caret />
        </button>
        <div className="flex flex-1 items-center justify-center gap-[10px]">
          <button aria-label="First artboard">
            <Arrow d="M0 1h2v8H0zM8 1v8L3 5z" fill="#777" />
          </button>
          <button aria-label="Previous artboard">
            <Arrow d={left} fill="#6b6b6b" />
          </button>
        </div>
        <input aria-label="Artboard" defaultValue="1" className="h-4 w-[43px] border border-[#2a2a2a] bg-[#a5a1a5] px-[2px] pt-[2px] text-[10px] text-black outline-none" />
        <button aria-label="Artboard list" className="flex w-[15px] items-center justify-center border-r border-[#2a2a2a] bg-[#484848]">
          <Caret />
        </button>
        <div className="flex w-[42px] items-center justify-center gap-[7px]">
          <button aria-label="Next artboard">
            <Arrow d={right} fill="#777" />
          </button>
          <button aria-label="Last artboard">
            <Arrow d="M1 1v8l5-4zM7 1h2v8H7z" fill="#777" />
          </button>
        </div>
        <div className="w-[200px] border-x border-[#333] pr-1 text-center leading-[17px]">Selection</div>
        <button aria-label="Status menu" className="flex w-[18px] items-center justify-center">
          <Arrow d={right} />
        </button>
      </div>
      <div className="flex flex-1 items-center border-l border-[#242424] bg-[#343434] px-[3px]">
        <Arrow d={left} />
        <span className="mr-auto ml-[213px] h-[15px] w-[15px] bg-[#939193]" />
        <Arrow d={right} />
      </div>
      <span className="w-4 border-l border-[#2a2a2a]" />
    </div>
  );
}

function Dock() {
  return (
    <aside className="flex w-[41px] shrink-0 flex-col border-r border-l-3 border-[#262626] bg-[#4b4b4b]">
      <div className="flex h-3 items-center justify-end border-b border-[#242424] bg-[#313131] pr-[3px]">
        <Rewind />
      </div>
      {dockGroups.map((group, g) => (
        <div key={g} className="flex flex-col items-center border-b border-[#242424] pb-[2px]">
          <div className="flex h-[10px] items-center pt-px">
            <Grip />
          </div>
          {group.map(([name, art]) => (
            <button key={name} title={name} className="flex h-7 items-center">
              <svg width="24" height="24" viewBox="0 0 24 24">
                {art}
              </svg>
            </button>
          ))}
        </div>
      ))}
    </aside>
  );
}

function Taskbar() {
  return (
    <footer className="flex h-6 shrink-0 items-center border-t border-[#b4c6e0] bg-linear-to-b from-[#91a7cb] to-[#6580ad] text-[11px] text-white [text-shadow:1px_1px_1px_#3b4f75]">
      <button aria-label="Start" className="flex w-[65px] justify-center">
        <svg width="18" height="17" viewBox="0 0 18 17">
          <path d="M4 2c2-1 4-1 5 0L8 8c-2-1-4-1-5 0zM10 3c2 1 4 1 7 0l-1 5c-3 1-5 1-7 0zM2 9c2-1 4-1 5 0l-1 6c-2-1-3-1-5 0zM9 10c2 1 4 1 6 0l-1 5c-2 1-4 1-6 0z" fill="#8ea3c2" stroke="#4f678f" />
        </svg>
      </button>
      <nav className="flex min-w-0 flex-1">
        {tasks.map(([label, art], i) => (
          <button key={i} className="h-[22px] w-[82px] shrink-0 pr-1 even:w-[81px]">
            <span
              className={clsx(
                "mt-px flex h-5 items-center gap-[3px] rounded border pl-[6px]",
                i === 6 ? "border-[#43597f] bg-[#5c7198]" : "border-transparent"
              )}
            >
              <svg className="shrink-0" width="16" height="16" viewBox="0 0 16 16">
                {art}
              </svg>
              {label}
            </span>
          </button>
        ))}
      </nav>
      <span className="mr-[5px] bg-[#4c658f] px-px leading-4">EN</span>
      <div className="mr-[3px] flex h-5 w-[195px] items-center gap-[2px] rounded-md border border-[#4c628b] bg-[#7389b0] pl-[6px]">
        {trayIcons.map((art, i) => (
          <svg key={i} className="shrink-0" width="16" height="16" viewBox="0 0 16 16">
            {art}
          </svg>
        ))}
        <time className="ml-auto pr-2">18:44</time>
      </div>
    </footer>
  );
}

export default function App() {
  const [open, setOpen] = useState("Edit");

  return (
    <div className="relative flex h-screen flex-col overflow-hidden bg-[#4b4b4b] font-['DejaVu_Sans_Condensed','Noto_Sans',sans-serif]">
      <MenuBar open={open} setOpen={setOpen} />
      {open === "Edit" && <EditMenu />}
      <ControlBar />
      <div className="flex min-h-0 flex-1">
        <Toolbox />
        <main className="flex min-w-0 flex-1 flex-col">
          <div className="h-5 shrink-0 border-b-[9px] border-[#292b29] bg-[#303030]" />
          <div className="flex min-h-0 flex-1">
            <div className="relative min-w-0 flex-1 overflow-hidden bg-[#5b5d5a]">
              <Artboard />
              <LayersPanel />
            </div>
            <div className="flex w-4 shrink-0 flex-col items-center justify-between border-l border-[#242424] bg-[#343434] py-1">
              <Arrow d={up} />
              <span className="h-[15px] w-full bg-[#939193]" />
              <Arrow d={down} />
            </div>
          </div>
          <StatusBar />
        </main>
        <Dock />
      </div>
      <Taskbar />
    </div>
  );
}
